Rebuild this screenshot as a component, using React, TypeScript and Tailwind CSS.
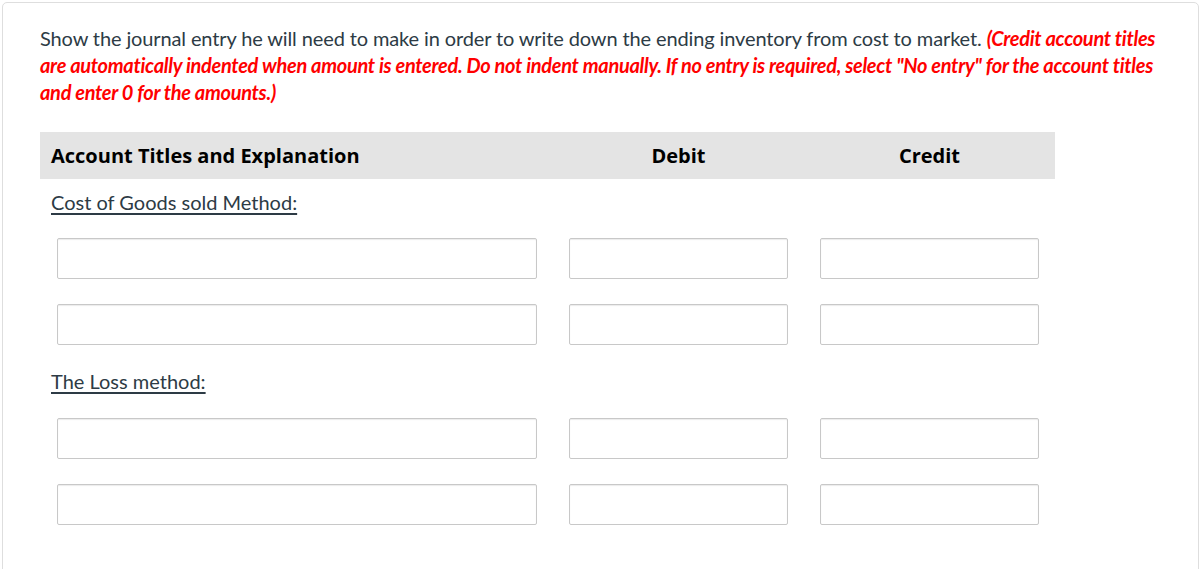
import React from "react";

const rows = [
  { label: "Cost of Goods sold Method:", h: "h-[46px]", inputs: 2 },
  { label: "The Loss method:", h: "h-[48px]", inputs: 2 },
];

const Field = ({ w }: { w: string }) => (
  <input
    type="text"
    className={`${w} h-[41px] bg-white border border-[#c8c8c8] rounded-[2px] shadow-[inset_0_1px_1px_rgba(0,0,0,0.08)] outline-none`}
  />
);

const EntryRow = () => (
  <div className="grid grid-cols-[513px_251px_251px] h-[66px] items-center">
    <div className="pl-[17px]">
      <Field w="w-[480px]" />
    </div>
    <div className="pl-[16px]">
      <Field w="w-[219px]" />
    </div>
    <div className="pl-[16px]">
      <Field w="w-[219px]" />
    </div>
  </div>
);

export default function App() {
  return (
    <div className="bg-white min-h-screen pt-[2px] pl-[2px] pr-[2px] font-['Lato',sans-serif]">
      <div className="border border-[#dedede] rounded-[5px] px-[37px] pt-[22px] pb-10 min-h-[600px]">
        <p className="text-[20px] leading-[27px] text-[#2d3b45] tracking-[-0.12px]">
          Show the journal entry he will need to make in order to write down the ending inventory from cost to
          market.{" "}
          <span className="text-[#ff0000] font-bold italic tracking-[-0.3px]">
            (Credit account titles are automatically indented when amount is entered. Do not indent manually. If no
            entry is required, select "No entry" for the account titles and enter 0 for the amounts.)
          </span>
        </p>

        <div className="mt-[26px] w-[1015px]">
          <div className="grid grid-cols-[513px_251px_251px] h-[47px] items-center bg-[#e4e4e4] font-['Open_Sans',sans-serif] font-bold text-[20px] text-black">
            <div className="pl-[11px]">Account Titles and Explanation</div>
            <div className="text-center">Debit</div>
            <div className="text-center">Credit</div>
          </div>

          {rows.map((r) => (
            <div key={r.label}>
              <div className={`${r.h} flex items-center pl-[11px]`}>
                <span className="text-[20px] text-[#2d3b45] underline decoration-2 underline-offset-[3px]">
                  {r.label}
                </span>
              </div>
              {Array.from({ length: r.inputs }).map((_, i) => (
                <EntryRow key={i} />
              ))}
            </div>
          ))}
        </div>
      </div>
    </div>
  );
}
